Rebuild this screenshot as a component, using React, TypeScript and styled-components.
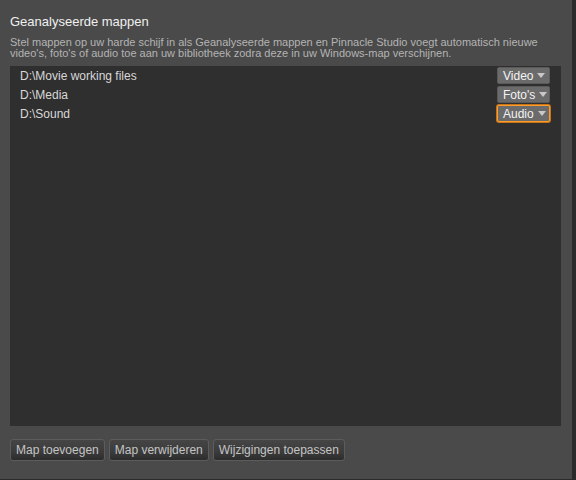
import React from "react";
import styled, { createGlobalStyle } from "styled-components";

const Global = createGlobalStyle`
  html, body { margin: 0; padding: 0; background: #4a4a4a; }
  body { font-family: "Liberation Sans", Arial, sans-serif; }
`;

const Window = styled.div`
  width: 576px;
  height: 480px;
  box-sizing: border-box;
  background: #4a4a4a;
  border-right: 4px solid #2b2b2b;
  border-bottom: 1px solid #2b2b2b;
  display: flex;
  flex-direction: column;
  padding: 14px 11px 0 10px;
`;

const Title = styled.div`
  color: #f0f0f0;
  font-size: 13px;
  line-height: 16px;
  height: 16px;
`;

const Desc = styled.div`
  color: #b4b4b4;
  font-size: 11px;
  line-height: 11px;
  margin-top: 7px;
  height: 22px;
  width: 560px;
`;

const List = styled.div`
  margin-top: 7px;
  background: #2f2f2f;
  height: 360px;
  flex-shrink: 0;
  display: flex;
  flex-direction: column;
  padding-top: 1px;
  gap: 2px;
  box-sizing: border-box;
`;

const Row = styled.div`
  display: flex;
  align-items: center;
  justify-content: space-between;
  height: 17px;
  padding: 0 11px 0 10px;
`;

const Path = styled.span`
  color: #d8d8d8;
  font-size: 12px;
`;

const Drop = styled.div<{ $active?: boolean }>`
  width: 53px;
  height: 17px;
  box-sizing: border-box;
  background: #6b6b6b;
  border: 1px solid ${(p) => (p.$active ? "#ff9c2a" : "#5a5a5a")};
  box-shadow: ${(p) => (p.$active ? "0 0 0 1px #c87418" : "none")};
  border-radius: 2px;
  color: #f4f4f4;
  font-size: 12px;
  display: flex;
  align-items: center;
  padding-left: 5px;
  gap: 4px;
`;

const Arrow = styled.span`
  width: 0;
  height: 0;
  border-left: 4px solid transparent;
  border-right: 4px solid transparent;
  border-top: 5px solid #c8c8c8;
`;

const Buttons = styled.div`
  display: flex;
  gap: 4px;
  margin-top: 13px;
`;

const Button = styled.div`
  height: 22px;
  box-sizing: border-box;
  padding: 0 5px;
  border: 1px solid #5c5c5c;
  border-radius: 3px;
  background: linear-gradient(#454545, #3b3b3b 60%, #2c2c2c);
  color: #c4c4c4;
  font-size: 12px;
  display: flex;
  align-items: center;
`;

const folders = [
  { path: "D:\\Movie working files", type: "Video" },
  { path: "D:\\Media", type: "Foto's" },
  { path: "D:\\Sound", type: "Audio", active: true },
];

export default function App() {
  return (
    <>
      <Global />
      <Window>
        <Title>Geanalyseerde mappen</Title>
        <Desc>
          Stel mappen op uw harde schijf in als Geanalyseerde mappen en Pinnacle Studio voegt automatisch nieuwe
          video's, foto's of audio toe aan uw bibliotheek zodra deze in uw Windows-map verschijnen.
        </Desc>
        <List>
          {folders.map((f) => (
            <Row key={f.path}>
              <Path>{f.path}</Path>
              <Drop $active={f.active}>
                {f.type}
                <Arrow />
              </Drop>
            </Row>
          ))}
        </List>
        <Buttons>
          <Button>Map toevoegen</Button>
          <Button>Map verwijderen</Button>
          <Button>Wijzigingen toepassen</Button>
        </Buttons>
      </Window>
    </>
  );
}
